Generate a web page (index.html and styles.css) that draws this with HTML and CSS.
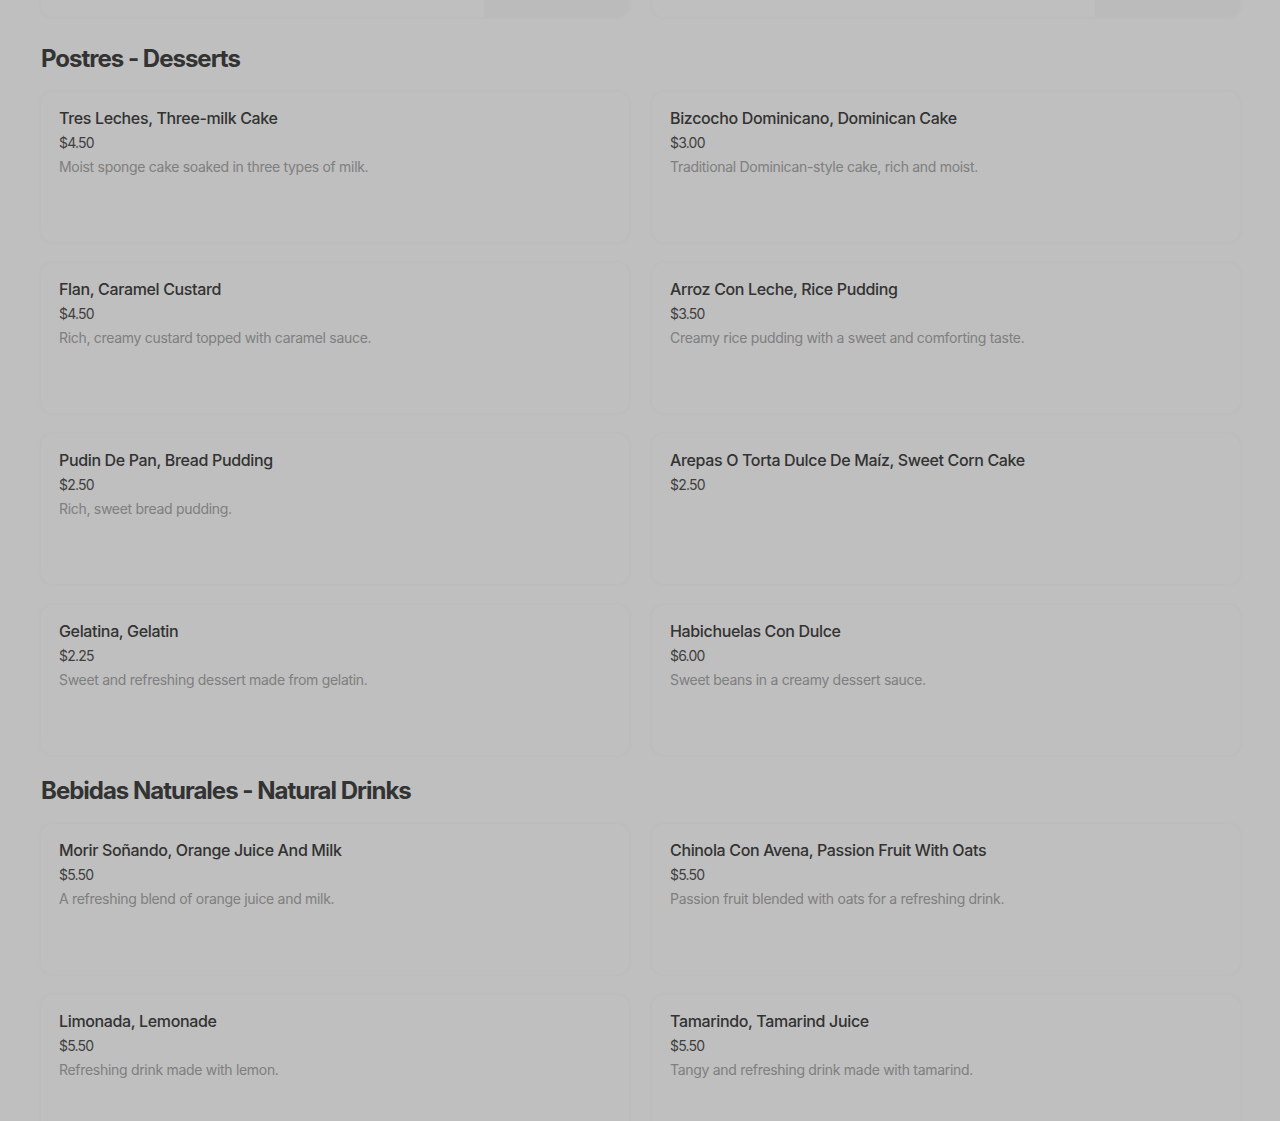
FILE: index.html
```html
<!DOCTYPE html>
<html lang="en">
<head>
    <meta charset="UTF-8">
    <meta name="viewport" content="width=device-width, initial-scale=1.0">
    <title>Menu</title>
    <link rel="stylesheet" href="styles.css">
</head>
<body>
    <div class="menu">
        <div class="grid stub">
            <div class="card with-img">
                <div class="card-text"></div>
                <div class="card-img"></div>
            </div>
            <div class="card with-img">
                <div class="card-text"></div>
                <div class="card-img"></div>
            </div>
        </div>

        <section class="section">
            <h2 class="section-title">Postres - Desserts</h2>
            <div class="grid">
                <div class="card">
                    <div class="item-name">Tres Leches, Three-milk Cake</div>
                    <div class="item-price">$4.50</div>
                    <div class="item-desc">Moist sponge cake soaked in three types of milk.</div>
                </div>
                <div class="card">
                    <div class="item-name">Bizcocho Dominicano, Dominican Cake</div>
                    <div class="item-price">$3.00</div>
                    <div class="item-desc">Traditional Dominican-style cake, rich and moist.</div>
                </div>
                <div class="card">
                    <div class="item-name">Flan, Caramel Custard</div>
                    <div class="item-price">$4.50</div>
                    <div class="item-desc">Rich, creamy custard topped with caramel sauce.</div>
                </div>
                <div class="card">
                    <div class="item-name">Arroz Con Leche, Rice Pudding</div>
                    <div class="item-price">$3.50</div>
                    <div class="item-desc">Creamy rice pudding with a sweet and comforting taste.</div>
                </div>
                <div class="card">
                    <div class="item-name">Pudin De Pan, Bread Pudding</div>
                    <div class="item-price">$2.50</div>
                    <div class="item-desc">Rich, sweet bread pudding.</div>
                </div>
                <div class="card">
                    <div class="item-name">Arepas O Torta Dulce De Maíz, Sweet Corn Cake</div>
                    <div class="item-price">$2.50</div>
                </div>
                <div class="card">
                    <div class="item-name">Gelatina, Gelatin</div>
                    <div class="item-price">$2.25</div>
                    <div class="item-desc">Sweet and refreshing dessert made from gelatin.</div>
                </div>
                <div class="card">
                    <div class="item-name">Habichuelas Con Dulce</div>
                    <div class="item-price">$6.00</div>
                    <div class="item-desc">Sweet beans in a creamy dessert sauce.</div>
                </div>
            </div>
        </section>

        <section class="section">
            <h2 class="section-title">Bebidas Naturales - Natural Drinks</h2>
            <div class="grid">
                <div class="card">
                    <div class="item-name">Morir Soñando, Orange Juice And Milk</div>
                    <div class="item-price">$5.50</div>
                    <div class="item-desc">A refreshing blend of orange juice and milk.</div>
                </div>
                <div class="card">
                    <div class="item-name">Chinola Con Avena, Passion Fruit With Oats</div>
                    <div class="item-price">$5.50</div>
                    <div class="item-desc">Passion fruit blended with oats for a refreshing drink.</div>
                </div>
                <div class="card">
                    <div class="item-name">Limonada, Lemonade</div>
                    <div class="item-price">$5.50</div>
                    <div class="item-desc">Refreshing drink made with lemon.</div>
                </div>
                <div class="card">
                    <div class="item-name">Tamarindo, Tamarind Juice</div>
                    <div class="item-price">$5.50</div>
                    <div class="item-desc">Tangy and refreshing drink made with tamarind.</div>
                </div>
            </div>
        </section>
    </div>

    <div class="backdrop"></div>
</body>
</html>
```

FILE: styles.css
```css
body {
    margin: 0;
    background-color: #fff;
    font-family: Inter, "Noto Sans", sans-serif;
    color: #444;
}

.menu {
    padding: 0 40px 0 41px;
}

.grid {
    display: grid;
    grid-template-columns: 1fr 1fr;
    column-gap: 23px;
    row-gap: 21px;
}

.stub {
    margin-top: -133px;
}

.section {
    margin-top: 26px;
}

.section + .section {
    margin-top: 20px;
}

.section-title {
    margin: 0 0 17px 0;
    font-size: 24px;
    line-height: 32px;
    font-weight: 700;
    letter-spacing: -1px;
    color: #444;
}

.card {
    height: 150px;
    box-sizing: border-box;
    padding: 16px 18px;
    background-color: #fff;
    border-radius: 12px;
    box-shadow: 0 0 5px rgba(0, 0, 0, 0.04);
}

.with-img {
    display: flex;
    padding: 0;
}

.card-text {
    flex: 1;
}

.card-img {
    width: 145px;
    background-color: #fafafa;
    border-radius: 0 12px 12px 0;
}

.item-name {
    font-size: 16px;
    line-height: 20px;
    font-weight: 500;
    letter-spacing: -0.35px;
    color: #444;
}

.item-price {
    margin-top: 5px;
    font-size: 14px;
    line-height: 20px;
    letter-spacing: -0.8px;
    color: #555;
}

.item-desc {
    margin-top: 4px;
    font-size: 14px;
    line-height: 20px;
    letter-spacing: -0.3px;
    color: #aaa;
}

.backdrop {
    position: fixed;
    inset: 0;
    background-color: rgba(0, 0, 0, 0.25);
}
```
